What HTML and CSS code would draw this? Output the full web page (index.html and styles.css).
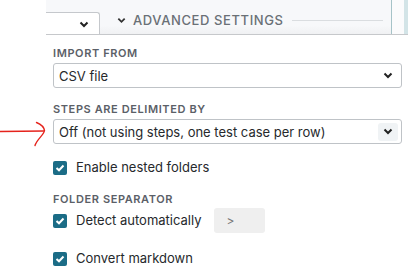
FILE: index.html
```html
<!DOCTYPE html>
<html lang="en">
<head>
<meta charset="UTF-8">
<meta name="viewport" content="width=device-width, initial-scale=1.0">
<title>Import settings</title>
<link rel="stylesheet" href="styles.css">
</head>
<body>
<div class="topbar">
  <div class="topbar-main">
    <div class="stub-select">
      <svg class="chevron" width="10" height="7" viewBox="0 0 10 7"><path d="M1.5 1.5 L5 5 L8.5 1.5" fill="none" stroke="#222" stroke-width="2"/></svg>
    </div>
    <div class="section-head">
      <svg class="chevron" width="9" height="7" viewBox="0 0 10 7"><path d="M1.5 1.5 L5 5 L8.5 1.5" fill="none" stroke="#333" stroke-width="2"/></svg>
      <span class="section-title">Advanced settings</span>
      <span class="rule"></span>
    </div>
  </div>
  <div class="topbar-side"></div>
</div>

<!-- hand drawn annotation arrow -->
<svg class="annotation" width="48" height="34" viewBox="0 0 48 34">
  <path d="M0 12.5 L44 12" fill="none" stroke="#e5231c" stroke-width="1.4"/>
  <path d="M36.5 3.5 C40 5 44 8 44.5 11.5 C44 16 37 20 35 26.5" fill="none" stroke="#e5231c" stroke-width="1.4" stroke-linecap="round"/>
</svg>

<div class="form">
  <div class="field">
    <div class="field-label">Import from</div>
    <div class="select">
      <span class="select-value">CSV file</span>
      <span class="select-arrow"><svg width="10" height="7" viewBox="0 0 10 7"><path d="M1.5 1.5 L5 5 L8.5 1.5" fill="none" stroke="#222" stroke-width="2"/></svg></span>
    </div>
  </div>

  <div class="field">
    <div class="field-label">Steps are delimited by</div>
    <div class="select">
      <span class="select-value">Off (not using steps, one test case per row)</span>
      <span class="select-arrow hover"><svg width="10" height="7" viewBox="0 0 10 7"><path d="M1.5 1.5 L5 5 L8.5 1.5" fill="none" stroke="#222" stroke-width="2"/></svg></span>
    </div>
  </div>

  <label class="check-row first">
    <span class="checkbox"><svg width="10" height="8" viewBox="0 0 10 8"><path d="M1.5 4 L4 6.3 L8.5 1.5" fill="none" stroke="#fff" stroke-width="2"/></svg></span>
    Enable nested folders
  </label>

  <div class="field-label spaced">Folder separator</div>
  <div class="separator-row">
    <label class="check-row">
      <span class="checkbox"><svg width="10" height="8" viewBox="0 0 10 8"><path d="M1.5 4 L4 6.3 L8.5 1.5" fill="none" stroke="#fff" stroke-width="2"/></svg></span>
      Detect automatically
    </label>
    <div class="sep-input">&gt;</div>
  </div>

  <label class="check-row last">
    <span class="checkbox"><svg width="10" height="8" viewBox="0 0 10 8"><path d="M1.5 4 L4 6.3 L8.5 1.5" fill="none" stroke="#fff" stroke-width="2"/></svg></span>
    Convert markdown
  </label>
</div>
</body>
</html>
```

FILE: styles.css
```css
body {
    margin: 0;
    width: 408px;
    height: 273px;
    overflow: hidden;
    position: relative;
    background: #fff;
    color: #26292c;
    font-family: Inter, "Noto Sans", sans-serif;
}

.topbar {
    display: flex;
    height: 34px;
    margin-left: 46px;
    border-bottom: 1px solid #c6c8cb;
}

.topbar-main {
    flex: 1;
    display: flex;
    background: linear-gradient(#f7f8fa 75%, #f0f1f3);
    border-right: 1px solid #a6c3c8;
}

.stub-select {
    width: 54px;
    height: 22px;
    margin-top: 12px;
    box-sizing: border-box;
    background: #fff;
    border: 1px solid #c5c8cc;
    border-left: none;
    border-bottom: none;
    border-top-right-radius: 3px;
    display: flex;
    align-items: center;
    justify-content: flex-end;
    padding: 2px 10px 0 0;
}

.section-head {
    flex: 1;
    display: flex;
    align-items: center;
    height: 20px;
    margin: 10px 0 0 17px;
}

.section-title {
    margin-left: 7px;
    font-size: 13px;
    font-weight: 500;
    letter-spacing: 0.6px;
    text-transform: uppercase;
    color: #6a7076;
}

.rule {
    flex: 1;
    height: 1px;
    margin: 0 8px 0 8px;
    background: #dadde0;
}

.topbar-side {
    width: 12px;
    background: #fbfbfc;
    border-right: 4px solid #d3e4e7;
}

.annotation {
    position: absolute;
    left: 0;
    top: 119px;
}

.form {
    padding: 0 6px 0 53px;
}

.field-label {
    font-size: 11px;
    line-height: 13px;
    font-weight: 600;
    letter-spacing: 0.6px;
    text-transform: uppercase;
    color: #5b6067;
    margin-bottom: 3px;
}

.field {
    margin-top: 15px;
}

.field:first-child {
    margin-top: 12px;
}

.select {
    display: flex;
    align-items: center;
    justify-content: space-between;
    height: 25px;
    box-sizing: border-box;
    border: 1px solid #bfc3c7;
    border-radius: 3px;
    padding: 0 3px 0 5px;
    font-size: 13px;
}

.select-arrow {
    display: flex;
    align-items: center;
    justify-content: center;
    width: 20px;
    height: 18px;
    border-radius: 3px;
}

.select-arrow.hover {
    background: #f0f3f5;
}

.check-row {
    display: flex;
    align-items: center;
    font-size: 13px;
    line-height: 17px;
}

.check-row.first {
    margin-top: 15px;
}

.check-row.last {
    margin-top: 17px;
}

.checkbox {
    display: flex;
    align-items: center;
    justify-content: center;
    width: 14px;
    height: 14px;
    margin-right: 9px;
    border-radius: 2px;
    background: #1b6c86;
}

.field-label.spaced {
    margin-top: 17px;
    margin-bottom: 2px;
}

.separator-row {
    display: flex;
    align-items: center;
}

.sep-input {
    width: 51px;
    height: 25px;
    box-sizing: border-box;
    margin-left: 12px;
    padding: 5px 0 0 13px;
    background: #efefef;
    border-radius: 3px;
    font-size: 12px;
    color: #777;
}
```
